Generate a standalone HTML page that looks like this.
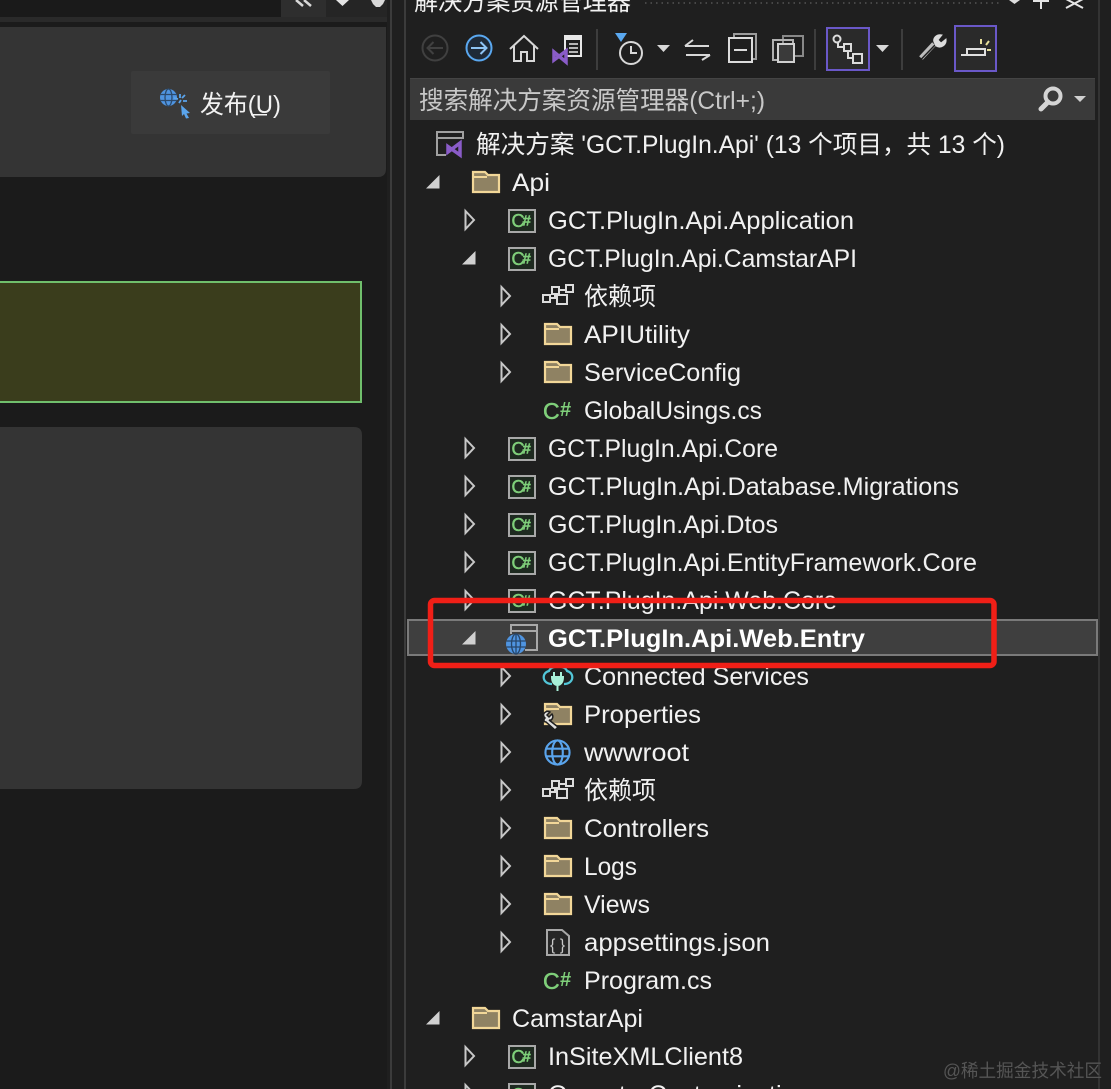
<!DOCTYPE html>
<html><head><meta charset="utf-8"><style>
html,body{margin:0;padding:0;background:#1f1f1f;overflow:hidden}
svg{display:block}
text{font-family:"Liberation Sans","Noto Sans CJK SC",sans-serif;font-size:25px;fill:#f1f1f1}
</style></head><body>
<svg xmlns="http://www.w3.org/2000/svg" width="1111" height="1089" viewBox="0 0 1111 1089">
<defs>
<symbol id="cs" viewBox="0 0 28 24" overflow="visible"><rect x="1" y="1" width="26" height="22" fill="#1e2a20" stroke="#a8a8a8" stroke-width="2"/><text x="3.500" y="18" style="font-size:18px;fill:#7fcf7a;stroke:#7fcf7a;stroke-width:.5">C</text><text x="14.500" y="16.500" style="font-size:15px;fill:#7fcf7a;font-weight:700;stroke:#7fcf7a;stroke-width:.4">#</text></symbol>
<symbol id="folder" viewBox="0 0 28 22" overflow="visible"><path d="M1 21V1H13L16 4H27V21Z" fill="#8f8263" stroke="#f2d798" stroke-width="2.200"/><path d="M1 6H15" stroke="#f2d798" stroke-width="2"/></symbol>
<symbol id="deps" viewBox="0 0 32 24" overflow="visible"><g fill="none" stroke="#dcdcdc" stroke-width="2"><rect x="1" y="11" width="7" height="7"/><rect x="10" y="3" width="7" height="7"/><rect x="24" y="1" width="7" height="7"/><rect x="15" y="11" width="10" height="9"/><path d="M8 14H15M17 6H24M13 10V14"/></g></symbol>
<symbol id="tr" viewBox="0 0 12 22" overflow="visible"><path d="M1.500 2L10 11L1.500 20Z" fill="none" stroke="#c8c8c8" stroke-width="2"/></symbol>
<symbol id="tb" viewBox="0 0 14 14" overflow="visible"><path d="M13.500 0V13.500H0Z" fill="#d0d0d0"/></symbol>
<symbol id="globe" viewBox="0 0 28 28" overflow="visible"><g fill="none" stroke="#5aa4ec" stroke-width="2.200"><circle cx="14" cy="14" r="12.500"/><ellipse cx="14" cy="14" rx="5.500" ry="12.500"/><path d="M2 10H26M2 18H26"/></g></symbol>
</defs>

<rect width="1111" height="1089" fill="#1f1f1f"/>
<!-- left area -->
<rect width="405" height="1089" fill="#1b1b1b"/>
<rect x="0" y="0" width="281" height="17" fill="#1a1a1a"/>
<rect x="0" y="17" width="390" height="5" fill="#2a2a2a"/>
<rect x="281" y="0" width="45" height="17" fill="#2e2e2e"/>
<rect x="326" y="0" width="64" height="17" fill="#252525"/>
<path d="M296 0L303 6M304 0L311 6" stroke="#d8d8d8" stroke-width="2.500" fill="none"/>
<path d="M336 0H349L342.500 6Z" fill="#e4e4e4"/>
<path d="M371 0H385L383 4L380 7H376L373 4Z" fill="#d8d8d8"/>
<path d="M0 27H386V169Q386 177 378 177H0Z" fill="#343434"/>
<rect x="131" y="71" width="199" height="63" rx="2" fill="#3a3a3a"/>
<!-- publish icon -->
<circle cx="168.500" cy="97.500" r="8.500" fill="#4f94e0"/>
<g fill="none" stroke="#2c4a6c" stroke-width="1.300"><ellipse cx="168.500" cy="97.500" rx="3.500" ry="8.500"/><path d="M160 94.500H177M160 100.500H177"/></g>
<path d="M180 94V98M187 101H183M185 95L182 98M174 98L178 99M179 103L181 100" fill="none" stroke="#5aa4ec" stroke-width="1.800"/>
<path d="M181 105L190 113L186.500 113.500L189 118L186 118.500L184 114L182 116Z" fill="#5aa4ec"/>
<text x="200" y="113" textLength="81" lengthAdjust="spacingAndGlyphs" style="fill:#f2f2f2">发布(U)</text>
<rect x="251" y="114" width="16" height="1.500" fill="#f2f2f2"/>
<rect x="-2" y="282" width="363" height="120" fill="#3a3d1c" stroke="#70bf6c" stroke-width="2"/>
<path d="M0 427H354Q362 427 362 435V781Q362 789 354 789H0Z" fill="#343434"/>
<rect x="387" y="0" width="18" height="1089" fill="#1f1f1f"/>
<rect x="390" y="0" width="2" height="1089" fill="#3b3b3b"/>
<rect x="404" y="0" width="2" height="1089" fill="#3b3b3b"/>
<rect x="1098" y="0" width="2" height="1089" fill="#333"/>

<!-- title -->
<text x="414" y="10" textLength="217" lengthAdjust="spacingAndGlyphs">解决方案资源管理器</text>
<path d="M645 3H1000" stroke="#555" stroke-width="1.500" stroke-dasharray="1.500 4"/>
<path d="M1009 0H1020L1014.500 4Z" fill="#ddd"/>
<path d="M1041 0V9M1033 1H1049" stroke="#e4e4e4" stroke-width="2"/>
<path d="M1066 -1L1083 8M1083 -1L1066 8" stroke="#e4e4e4" stroke-width="2"/>

<!-- toolbar -->
<g fill="none" stroke-width="2">
<circle cx="435" cy="48" r="12.500" stroke="#404040"/><path d="M443 48H428M433.500 42L427.500 48L433.500 54" stroke="#404040"/>
<circle cx="479" cy="48" r="12.500" stroke="#5aa8f0" fill="#1e2a38"/><path d="M471 48H486M480.500 42L486.500 48L480.500 54" stroke="#8ec4f4"/>
<path d="M510 49L524 36L538 49M514 46V61H521V52H527V61H534V46" stroke="#d8d8d8"/>
<rect x="565" y="36" width="16" height="20" fill="#1f1f1f" stroke="#e8e8e8"/><rect x="565" y="36" width="16" height="4" fill="#e8e8e8" stroke="none"/><path d="M569 44H578M569 48H578M569 52H578" stroke="#e8e8e8" stroke-width="1.500"/>
<path d="M554 52L566 62V51L554 60Z" fill="#1f1f1f" stroke="#8a5cc8" stroke-width="3.500"/>
<path d="M597 29V70" stroke="#3d3d3d"/>
<path d="M615 33H627L621 42Z" fill="#5aa8f0" stroke="none"/>
<circle cx="631" cy="53" r="11" stroke="#d8d8d8"/><path d="M631 46V53H637" stroke="#d8d8d8"/>
<path d="M657 45H670L663.500 52Z" fill="#d8d8d8" stroke="none"/>
<path d="M685 46H709M685 46L693 40M686 55H710M710 55L702 60" stroke="#d8d8d8"/>
<rect x="734" y="34" width="22" height="25" stroke="#9c9c9c"/><rect x="729" y="38" width="23" height="24" fill="#1f1f1f" stroke="#dcdcdc"/><path d="M734 50H747" stroke="#dcdcdc"/>
<rect x="783" y="36" width="20" height="20" stroke="#888"/><rect x="773" y="40" width="20" height="20" stroke="#b0b0b0"/><rect x="778" y="44" width="16" height="18" fill="#3a3a3a" stroke="#d0d0d0"/>
<path d="M815 29V70" stroke="#3d3d3d"/>
<rect x="827" y="28" width="42" height="42" fill="#2a2a2a" stroke="#6a58c8"/>
<circle cx="837" cy="39" r="3.500" stroke="#dcdcdc"/><rect x="844" y="44" width="7" height="7" stroke="#dcdcdc"/><rect x="853" y="54" width="9" height="9" stroke="#dcdcdc"/><path d="M838 42V47H844M848 51V58H853" stroke="#dcdcdc"/>
<path d="M876 45H889L882.500 52Z" fill="#d8d8d8" stroke="none"/>
<path d="M902 29V70" stroke="#3d3d3d"/>
<path d="M921 58L934 44" stroke="#bdbdbd" stroke-width="5"/><path d="M921 59.500L935 45" stroke="#1f1f1f" stroke-width="1.500"/>
<path d="M935 44C931 38 937 34 942 35L938 40L941 43L946 39C947 45 941 49 936 46Z" fill="#dcdcdc" stroke="#dcdcdc" stroke-width="1"/>
<rect x="955" y="26" width="41" height="45" fill="#2a2a2a" stroke="#6a58c8"/>
<path d="M961 55H967V49H985V55H967" stroke="#e0e0e0"/>
<path d="M981 39V44M986 45L989 41M987 50H991" stroke="#e8e09a"/>
</g>

<!-- search -->
<rect x="410" y="78" width="685" height="42" fill="#3a3a3a"/>
<rect x="410" y="78" width="685" height="1" fill="#444"/>
<text x="419" y="109" textLength="346" lengthAdjust="spacingAndGlyphs" style="fill:#c8c8c8">搜索解决方案资源管理器(Ctrl+;)</text>
<circle cx="1053" cy="96" r="7.500" fill="none" stroke="#d4d4d4" stroke-width="4"/>
<path d="M1048 102L1041 109" stroke="#d4d4d4" stroke-width="5" stroke-linecap="round"/>
<path d="M1074 96H1086L1080 102Z" fill="#d0d0d0"/>

<!-- solution icon -->
<g fill="none" stroke="#a0a0a0" stroke-width="2"><path d="M446 155H437V132H463V139M437 138H463"/></g>
<path d="M448 146.500L460 155V143L448 152Z" fill="#1f1f1f" stroke="#8a5cc8" stroke-width="3.500"/>
<text x="476" y="153" textLength="529" lengthAdjust="spacingAndGlyphs">解决方案 'GCT.PlugIn.Api' (13 个项目，共 13 个)</text>

<!-- selected row -->
<rect x="408" y="620" width="689" height="35" fill="#3f3f3f" stroke="#7a7a7a" stroke-width="2"/>

<!-- arrows -->
<use href="#tb" x="426" y="175" width="14" height="14"/>
<use href="#tr" x="464" y="209" width="12" height="22"/>
<use href="#tb" x="462" y="251" width="14" height="14"/>
<use href="#tr" x="500" y="285" width="12" height="22"/>
<use href="#tr" x="500" y="323" width="12" height="22"/>
<use href="#tr" x="500" y="361" width="12" height="22"/>
<use href="#tr" x="464" y="437" width="12" height="22"/>
<use href="#tr" x="464" y="475" width="12" height="22"/>
<use href="#tr" x="464" y="513" width="12" height="22"/>
<use href="#tr" x="464" y="551" width="12" height="22"/>
<use href="#tr" x="464" y="589" width="12" height="22"/>
<use href="#tb" x="462" y="631" width="14" height="14"/>
<use href="#tr" x="500" y="665" width="12" height="22"/>
<use href="#tr" x="500" y="703" width="12" height="22"/>
<use href="#tr" x="500" y="741" width="12" height="22"/>
<use href="#tr" x="500" y="779" width="12" height="22"/>
<use href="#tr" x="500" y="817" width="12" height="22"/>
<use href="#tr" x="500" y="855" width="12" height="22"/>
<use href="#tr" x="500" y="893" width="12" height="22"/>
<use href="#tr" x="500" y="931" width="12" height="22"/>
<use href="#tb" x="426" y="1011" width="14" height="14"/>
<use href="#tr" x="464" y="1045" width="12" height="22"/>
<use href="#tr" x="464" y="1083" width="12" height="22"/>

<!-- icons -->
<use href="#folder" x="472" y="171" width="28" height="22"/>
<use href="#cs" x="508" y="209" width="28" height="24"/>
<use href="#cs" x="508" y="247" width="28" height="24"/>
<use href="#deps" x="542" y="284" width="32" height="24"/>
<use href="#folder" x="544" y="323" width="28" height="22"/>
<use href="#folder" x="544" y="361" width="28" height="22"/>
<text x="543" y="419" style="font-size:23px;fill:#7fcf7a;stroke:#7fcf7a;stroke-width:.5">C</text><text x="560" y="416" style="font-size:20px;font-weight:700;fill:#7fcf7a">#</text>
<use href="#cs" x="508" y="437" width="28" height="24"/>
<use href="#cs" x="508" y="475" width="28" height="24"/>
<use href="#cs" x="508" y="513" width="28" height="24"/>
<use href="#cs" x="508" y="551" width="28" height="24"/>
<use href="#cs" x="508" y="589" width="28" height="24"/>
<!-- web entry icon -->
<path d="M511 634V625H537V650H525M511 631H537" fill="none" stroke="#a8a8a8" stroke-width="2"/>
<circle cx="516" cy="644" r="10" fill="#4f94e0"/>
<g fill="none" stroke="#27466a" stroke-width="1.300"><ellipse cx="516" cy="644" rx="4.500" ry="10"/><path d="M506.500 641H525.500M506.500 647H525.500M516 634V654"/></g>
<!-- connected services -->
<path d="M552 684C542 684 541 673 549 671C551 665 565 665 567 671C575 673 574 684 564 684" fill="none" stroke="#52c6d8" stroke-width="2.200"/>
<path d="M554 672V677M561 672V677M552 677H563C563 683 560 685 557.500 685C555 685 552 683 552 677ZM557.500 685V691" fill="#a8f0d8" stroke="#a8f0d8" stroke-width="2"/>
<use href="#folder" x="544" y="703" width="28" height="22"/>
<path d="M545 718C541 714 546 710 550 712L547 715L549 717L552 714C554 717 552 721 549 720L558 727L555 730L546 722C544 722 543 720 545 718Z" fill="#e0e0e0" stroke="#1f1f1f" stroke-width="1.500"/>
<use href="#globe" x="544" y="739" width="27" height="27"/>
<use href="#deps" x="542" y="778" width="32" height="24"/>
<use href="#folder" x="544" y="817" width="28" height="22"/>
<use href="#folder" x="544" y="855" width="28" height="22"/>
<use href="#folder" x="544" y="893" width="28" height="22"/>
<path d="M547 930H562L569 936V955H547Z" fill="#262626" stroke="#a8a8a8" stroke-width="2"/>
<text x="550" y="950" style="font-size:16px;fill:#c8c8c8">{ }</text>
<text x="543" y="989" style="font-size:23px;fill:#7fcf7a;stroke:#7fcf7a;stroke-width:.5">C</text><text x="560" y="986" style="font-size:20px;font-weight:700;fill:#7fcf7a">#</text>
<use href="#folder" x="472" y="1007" width="28" height="22"/>
<use href="#cs" x="508" y="1045" width="28" height="24"/>
<use href="#cs" x="508" y="1083" width="28" height="24"/>

<!-- labels -->
<text x="512" y="191" textLength="38" lengthAdjust="spacingAndGlyphs">Api</text>
<text x="548" y="229" textLength="306" lengthAdjust="spacingAndGlyphs">GCT.PlugIn.Api.Application</text>
<text x="548" y="267" textLength="309" lengthAdjust="spacingAndGlyphs">GCT.PlugIn.Api.CamstarAPI</text>
<text x="584" y="305" textLength="72" lengthAdjust="spacingAndGlyphs">依赖项</text>
<text x="584" y="343" textLength="106" lengthAdjust="spacingAndGlyphs">APIUtility</text>
<text x="584" y="381" textLength="157" lengthAdjust="spacingAndGlyphs">ServiceConfig</text>
<text x="584" y="419" textLength="178" lengthAdjust="spacingAndGlyphs">GlobalUsings.cs</text>
<text x="548" y="457" textLength="230" lengthAdjust="spacingAndGlyphs">GCT.PlugIn.Api.Core</text>
<text x="548" y="495" textLength="411" lengthAdjust="spacingAndGlyphs">GCT.PlugIn.Api.Database.Migrations</text>
<text x="548" y="533" textLength="230" lengthAdjust="spacingAndGlyphs">GCT.PlugIn.Api.Dtos</text>
<text x="548" y="571" textLength="429" lengthAdjust="spacingAndGlyphs">GCT.PlugIn.Api.EntityFramework.Core</text>
<text x="548" y="609" textLength="289" lengthAdjust="spacingAndGlyphs">GCT.PlugIn.Api.Web.Core</text>
<text x="548" y="647" textLength="317" lengthAdjust="spacingAndGlyphs" style="font-weight:700;fill:#fff">GCT.PlugIn.Api.Web.Entry</text>
<text x="584" y="685" textLength="225" lengthAdjust="spacingAndGlyphs">Connected Services</text>
<text x="584" y="723" textLength="117" lengthAdjust="spacingAndGlyphs">Properties</text>
<text x="584" y="761" textLength="105" lengthAdjust="spacingAndGlyphs">wwwroot</text>
<text x="584" y="799" textLength="72" lengthAdjust="spacingAndGlyphs">依赖项</text>
<text x="584" y="837" textLength="125" lengthAdjust="spacingAndGlyphs">Controllers</text>
<text x="584" y="875" textLength="53" lengthAdjust="spacingAndGlyphs">Logs</text>
<text x="584" y="913" textLength="66" lengthAdjust="spacingAndGlyphs">Views</text>
<text x="584" y="951" textLength="186" lengthAdjust="spacingAndGlyphs">appsettings.json</text>
<text x="584" y="989" textLength="128" lengthAdjust="spacingAndGlyphs">Program.cs</text>
<text x="512" y="1027" textLength="131" lengthAdjust="spacingAndGlyphs">CamstarApi</text>
<text x="548" y="1065" textLength="195" lengthAdjust="spacingAndGlyphs">InSiteXMLClient8</text>
<text x="548" y="1103" textLength="262" lengthAdjust="spacingAndGlyphs">OperatorCustomization</text>

<!-- red annotation -->
<rect x="430.500" y="600.500" width="563.500" height="65" rx="4" fill="none" stroke="#f01f17" stroke-width="5.500"/>

<!-- watermark -->
<text x="943" y="1077" textLength="159" lengthAdjust="spacingAndGlyphs" style="font-size:18px;fill:#555">@稀土掘金技术社区</text>
</svg>
</body></html>
